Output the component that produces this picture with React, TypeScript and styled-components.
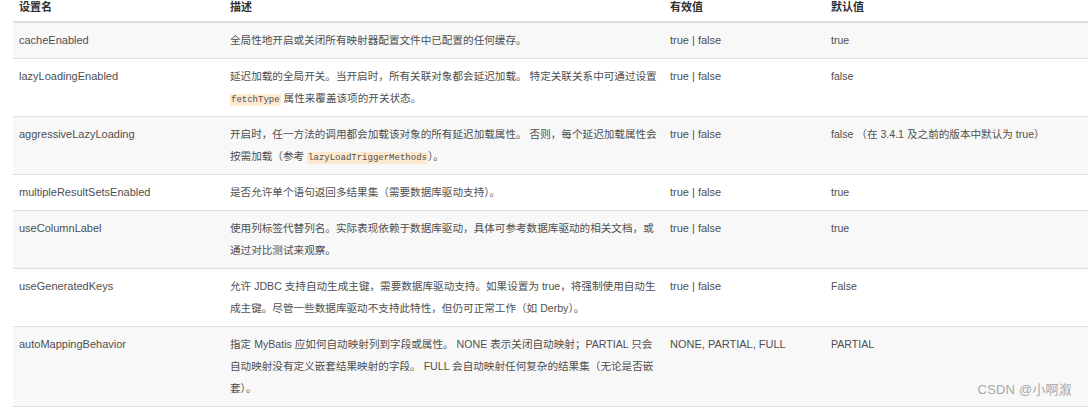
import styled, { createGlobalStyle } from "styled-components";

// ==================== Data ====================

type Part = string | { code: string };

interface SettingRow {
  name: string;
  desc: Part[][];
  valid: string;
  def: string;
}

const ROWS: SettingRow[] = [
  {
    name: "cacheEnabled",
    desc: [["全局性地开启或关闭所有映射器配置文件中已配置的任何缓存。"]],
    valid: "true | false",
    def: "true",
  },
  {
    name: "lazyLoadingEnabled",
    desc: [
      ["延迟加载的全局开关。当开启时，所有关联对象都会延迟加载。 特定关联关系中可通过设置"],
      [{ code: "fetchType" }, " 属性来覆盖该项的开关状态。"],
    ],
    valid: "true | false",
    def: "false",
  },
  {
    name: "aggressiveLazyLoading",
    desc: [
      ["开启时，任一方法的调用都会加载该对象的所有延迟加载属性。 否则，每个延迟加载属性会"],
      ["按需加载（参考 ", { code: "lazyLoadTriggerMethods" }, "）。"],
    ],
    valid: "true | false",
    def: "false （在 3.4.1 及之前的版本中默认为 true）",
  },
  {
    name: "multipleResultSetsEnabled",
    desc: [["是否允许单个语句返回多结果集（需要数据库驱动支持）。"]],
    valid: "true | false",
    def: "true",
  },
  {
    name: "useColumnLabel",
    desc: [
      ["使用列标签代替列名。实际表现依赖于数据库驱动，具体可参考数据库驱动的相关文档，或"],
      ["通过对比测试来观察。"],
    ],
    valid: "true | false",
    def: "true",
  },
  {
    name: "useGeneratedKeys",
    desc: [
      ["允许 JDBC 支持自动生成主键，需要数据库驱动支持。如果设置为 true，将强制使用自动生"],
      ["成主键。尽管一些数据库驱动不支持此特性，但仍可正常工作（如 Derby）。"],
    ],
    valid: "true | false",
    def: "False",
  },
  {
    name: "autoMappingBehavior",
    desc: [
      ["指定 MyBatis 应如何自动映射列到字段或属性。 NONE 表示关闭自动映射；PARTIAL 只会"],
      ["自动映射没有定义嵌套结果映射的字段。 FULL 会自动映射任何复杂的结果集（无论是否嵌"],
      ["套）。"],
    ],
    valid: "NONE, PARTIAL, FULL",
    def: "PARTIAL",
  },
];

// ==================== Styled Components ====================

const GlobalStyle = createGlobalStyle`
  html, body {
    margin: 0;
    padding: 0;
    background: #fff;
  }
  body {
    font-family: "Liberation Sans", "Noto Sans CJK SC", sans-serif;
  }
`;

const Page = styled.div`
  position: relative;
  width: 1088px;
  height: 407px;
  overflow: hidden;
  padding-left: 13px;
  box-sizing: border-box;
`;

const Table = styled.table`
  width: 1075px;
  border-collapse: collapse;
  table-layout: fixed;
  font-size: 11px;
  color: #4f4f4f;
`;

const HeadCell = styled.th<{ $w?: number }>`
  width: ${({ $w }) => ($w ? `${$w}px` : "auto")};
  height: 21px;
  box-sizing: border-box;
  text-align: left;
  vertical-align: top;
  font-weight: bold;
  color: #2f2f2f;
  font-size: 11px;
  line-height: 14px;
  padding: 0 6px 7px;
  border-bottom: 2px solid #dcdcdc;
`;

const Row = styled.tr<{ $striped: boolean }>`
  background: ${({ $striped }) => ($striped ? "#f8f8f8" : "#fff")};
  border-bottom: 1px solid #dedede;
`;

const Cell = styled.td<{ $cjk?: boolean }>`
  vertical-align: top;
  padding: 6px 6px 7px;
  white-space: nowrap;
  font-size: ${({ $cjk }) => ($cjk ? "10.6px" : "11px")};
`;

const Line = styled.div`
  height: 22px;
  line-height: 22px;
`;

const Code = styled.code`
  font-family: "Liberation Mono", monospace;
  font-size: 9px;
  line-height: 12px;
  background: #fde9cf;
  border-radius: 2px;
  padding: 1px 1px;
  color: #4f4f4f;
`;

const Watermark = styled.div`
  position: absolute;
  right: 16px;
  bottom: 9px;
  font-size: 13px;
  color: #a8a8a8;
  letter-spacing: 0.2px;
`;

// ==================== Component ====================

function Desc({ lines }: { lines: Part[][] }) {
  return (
    <>
      {lines.map((line, i) => (
        <Line key={i}>
          {line.map((p, j) =>
            typeof p === "string" ? (
              <span key={j}>{p}</span>
            ) : (
              <Code key={j}>{p.code}</Code>
            )
          )}
        </Line>
      ))}
    </>
  );
}

export default function App() {
  return (
    <Page>
      <GlobalStyle />
      <Table>
        <thead>
          <tr>
            <HeadCell $w={211}>设置名</HeadCell>
            <HeadCell $w={440}>描述</HeadCell>
            <HeadCell $w={161}>有效值</HeadCell>
            <HeadCell>默认值</HeadCell>
          </tr>
        </thead>
        <tbody>
          {ROWS.map((r, i) => (
            <Row key={r.name} $striped={i % 2 === 0}>
              <Cell>
                <Line>{r.name}</Line>
              </Cell>
              <Cell $cjk>
                <Desc lines={r.desc} />
              </Cell>
              <Cell>
                <Line>{r.valid}</Line>
              </Cell>
              <Cell $cjk>
                <Line>{r.def}</Line>
              </Cell>
            </Row>
          ))}
        </tbody>
      </Table>
      <Watermark>CSDN @小啊溆</Watermark>
    </Page>
  );
}
